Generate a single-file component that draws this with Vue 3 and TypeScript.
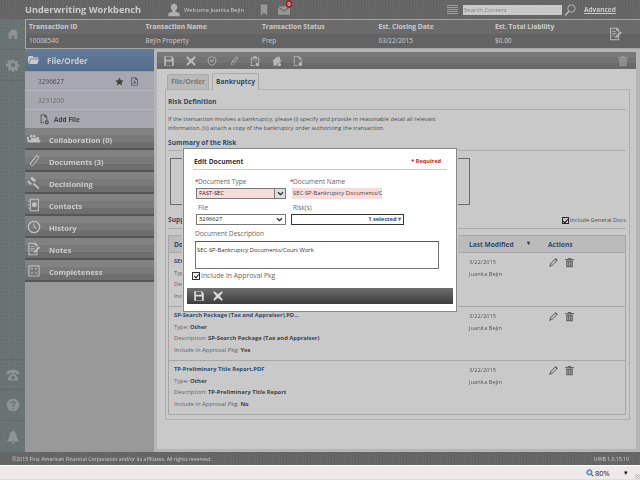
<script setup lang="ts">
const txCols = [
  { label: 'Transaction ID', value: '10008540' },
  { label: 'Transaction Name', value: 'Bejin Property' },
  { label: 'Transaction Status', value: 'Prep' },
  { label: 'Est. Closing Date', value: '03/22/2015' },
  { label: 'Est. Total Liability', value: '$0.00' },
]
const railTop = [
  'M2 10 10 3l3 2.5V3.5h2v3.8L18 10h-2v7h-4v-5H8v5H4v-7z',
  'M8.5 2h3l.4 2.2 1.6.7 1.9-1.3 2 2-1.3 1.9.7 1.6 2.2.4v3l-2.2.4-.7 1.6 1.3 1.9-2 2-1.9-1.3-1.6.7-.4 2.2h-3l-.4-2.2-1.6-.7-1.9 1.3-2-2 1.3-1.9-.7-1.6L0 11.5v-3l2.2-.4.7-1.6-1.3-1.9 2-2 1.9 1.3 1.6-.7zM10 7a3 3 0 1 0 0 6 3 3 0 0 0 0-6z',
]
const railBottom = [
  'M1 7c0-3 4-4.500 9-4.500S19 4 19 7v2h-4.500V6.500h-2V8h-5V6.500h-2V9H1zM6.500 9h7l3.500 6v3H3v-3zM10 11a2.500 2.500 0 1 0 0 5 2.500 2.500 0 0 0 0-5z',
  'M10 1a9 9 0 1 0 0 18 9 9 0 0 0 0-18zm-.9 13h2v2h-2zM10 4c2.200 0 3.800 1.300 3.800 3.300 0 1.500-.9 2.300-1.800 3-.7.500-.9.900-.9 1.700H9.100c0-1.400.4-2.100 1.300-2.800.7-.6 1.200-1 1.200-1.800 0-.8-.7-1.400-1.700-1.400-1 0-1.700.6-1.800 1.700H6.100C6.200 5.300 7.700 4 10 4z',
  'M10 1c1 0 1.500.6 1.500 1.400C14 3.200 15 5 15 8c0 4 1.500 5.500 3 7v1.500H2V15c1.500-1.500 3-3 3-7 0-3 1-4.800 3.500-5.600C8.500 1.600 9 1 10 1zM8 17.500h4a2 2 0 0 1-4 0z',
]
const toolbar = [
  'M2 2h13l3 3v13H2zM5 3v5h9V3zM5 11v6h10v-6z',
  'M4 2l6 5 6-5 2 2-5 6 5 6-2 2-6-5-6 5-2-2 5-6-5-6z',
  'M10 2l7 2.500V10c0 4-3 6.500-7 8-4-1.500-7-4-7-8V4.500zM10 3.500 4.200 5.500V10c0 3.300 2.500 5.400 5.800 6.700 3.300-1.300 5.800-3.400 5.800-6.700V5.500zM6.500 9l1-1 2 2 3.500-3.500 1 1-4.500 4.500z',
  'M14 3c2 0 3 2 2 4l-7 9c-2 2-5 0-4-2l6-8 1 .7-6 8c-.5 1 1 2 2 1l7-9c.6-1 0-2.500-1.500-2.200L7 12l-1-.7 6-6.500C12.500 3.500 13 3 14 3z',
  'M6 3h2V2h4v1h2v2H6zM3 4h2v2h10V4h2v9h-1.500V7h-11v10H10v1.500H3zM7 9h1v1H7zm3 0h3v1h-3zm-3 3h1v1H7zm3 0h1v1h-1zm4 1a3 3 0 1 1 0 6 3 3 0 0 1 0-6z',
  'M2 10l8-7 2 1.700V3h3v4.300L18 10h-2.200v2.500a4 4 0 0 0-5 5H4V10zm12 3.500a2.700 2.700 0 1 1 0 5.400 2.700 2.700 0 0 1 0-5.400z',
  'M3 2h9l4 4v6h-1.400V7H11V3.400H4.400v13.200H10V18H3zM14 12a3.200 3.200 0 1 1 0 6.400 3.200 3.200 0 0 1 0-6.400z',
]
const trash = 'M7 2h6v1.500h5V6H2V3.500h5zM4 7h12v11.500H4zm2.500 2v7.500h1V9zm3 0v7.500h1V9zm3 0v7.500h1V9z'
const pencil = 'M14 2l4 4-10 10-6 2 2-6zM13 5l-8 8 2 2 8-8z'
const accordion = [
  { label: 'Collaboration (0)', icon: 'M3 9a2 2 0 1 1 0-.1zM8 6a2 2 0 1 1 0-.1zM12.500 6a2 2 0 1 1 0-.1zM17.500 9a2 2 0 1 1 0-.1zM1 11h18v4H1zM6 8.500h8V11H6z' },
  { label: 'Documents (3)', icon: 'M14 2c2.500 0 4 2.500 2.500 5l-7 9c-2 2.500-6.500.5-5-3l6-8 1.200.8-6 8c-.8 1.700 1.800 3 3 1.500l7-9c.8-1.500-.5-3-2-2.300L7 12l-1-.8 6-7C12.500 3 13 2 14 2z' },
  { label: 'Decisioning', icon: 'M7 1l6 5-2.500 3L4.500 4zM2 6l5 5-2 2-5-5zM10 10l8 7-1.500 2-8-7z' },
  { label: 'Contacts', icon: 'M4 1h13v18H4zm1.500 1.500v15h10v-15zM10.500 6a3.500 3.500 0 1 1 0 7 3.500 3.500 0 0 1 0-7zM2 4h2v1.500H2zm0 5h2v1.500H2zm0 5h2v1.500H2z' },
  { label: 'History', icon: 'M10 1a9 9 0 1 1 0 18 9 9 0 0 1 0-18zm0 1.800a7.200 7.200 0 1 0 0 14.400 7.200 7.200 0 0 0 0-14.400zM9.300 5h1.400v4.700l3.500 2-.7 1.200-4.200-2.400z' },
  { label: 'Notes', icon: 'M2 1h10l3 3v3l-1.500 1.500V5h-3V2.500h-7v15h10V13l1.500-1.500V19H2zM5 6h5v1.200H5zm0 3h6v1.200H5zm0 3h4v1.200H5zm12-5.500L19 8l-7 7-3 1 1-3z' },
  { label: 'Completeness', icon: 'M2 2h16v16H2zm1.500 1.500v13h13v-13zM5.500 6h3v1.500h-3zm6 0h3v1.500h-3zm-6 6h3v1.500h-3zm6 0h3v1.500h-3z' },
]
const docs = [
  { title: 'SEC-SP-Bankruptcy Documents/Court Work.PDF', type: 'FAST-SEC', desc: 'SEC-SP-Bankruptcy Documents/Court Work', pkg: 'Yes' },
  { title: 'SP-Search Package (Tax and Appraiser).PD...', type: 'Other', desc: 'SP-Search Package (Tax and Appraiser)', pkg: 'Yes' },
  { title: 'TP-Preliminary Title Report.PDF', type: 'Other', desc: 'TP-Preliminary Title Report', pkg: 'No' },
]
</script>

<template>
  <div class="page">
    <div class="shell">
      <header class="topbar">
        <span class="app-title">Underwriting Workbench</span>
        <svg class="ic user" viewBox="0 0 20 20"><path d="M10 1a4.500 4.500 0 0 1 4.500 5c0 2-1 4-2.500 4.700v1.300l6 2.500V19H2v-4.500L8 12v-1.300C6.500 10 5.500 8 5.500 6A4.500 4.500 0 0 1 10 1z" /></svg>
        <span class="welcome">Welcome Juanita Bejin</span>
        <svg class="ic bookmark" viewBox="0 0 10 14"><path d="M1 0h8v14L5 10.500 1 14z" /></svg>
        <span class="mail">
          <svg class="ic mail-ic" viewBox="0 0 14 10"><path d="M0 0h14L7 5zM0 1.500 7 6.500l7-5V10H0z" /></svg>
          <b class="badge">9</b>
        </span>
        <span class="list-ic"><i></i><i></i><i></i><i></i><i></i></span>
        <input class="search" placeholder="Search Content" />
        <svg class="mag" viewBox="0 0 12 12"><circle cx="7.500" cy="4.500" r="3.700" fill="none" stroke="#e6e6e6" stroke-width="1" /><path d="M5 7.200 1 11.500" stroke="#e6e6e6" stroke-width="1.600" /></svg>
        <a class="advanced">Advanced</a>
      </header>

      <aside class="rail">
        <div class="rail-group">
          <span v-for="(d, i) in railTop" :key="i" class="rail-cell"><svg class="ic" viewBox="0 0 20 20"><path :d="d" /></svg></span>
        </div>
        <div class="rail-group">
          <span v-for="(d, i) in railBottom" :key="i" class="rail-cell"><svg class="ic" viewBox="0 0 20 20"><path :d="d" /></svg></span>
        </div>
      </aside>

      <div class="workspace">
        <section class="txbar">
          <div v-for="c in txCols" :key="c.label" class="txcol">
            <div class="txlabel">{{ c.label }}</div>
            <div class="txvalue">{{ c.value }}</div>
          </div>
          <svg class="ic txedit" viewBox="0 0 20 20"><path d="M3 1h10l3 3v3l-1.500 1.500V5h-3V2.500H4.500v15h10V13l1.500-1.500V19H3zM6 6h5v1.200H6zm0 3h6v1.200H6zm0 3h4v1.200H6zm12-5.500L20 8l-7 7-3 1 1-3z" /></svg>
        </section>

        <div class="body">
          <nav class="sidebar">
            <div class="side-head">
              <svg class="ic folder" viewBox="0 0 14 10"><path d="M2 0h4l1 1.500h6V3H3L1 9H0V1zM3.500 4H14l-2 6H1.500z" /></svg>
              File/Order
            </div>
            <div class="side-sub">
              <span>3296627</span>
              <span class="sub-icons">
                <svg class="ic-dark" viewBox="0 0 20 20"><path d="M10 1l2.800 6 6.700.8-5 4.500 1.400 6.700L10 15.600 4.100 19l1.400-6.700-5-4.500L7.200 7z" /></svg>
                <svg class="ic-dark" viewBox="0 0 20 20"><path d="M3 1h10l4 4v14H3zm1.500 1.500v15h11V6h-3.500V2.500zM10 7c1 0 1 2 .5 3.500l2.500 3c1 .1 1.500.5 1 1-.6.400-2-.2-2.500-.8l-3.500 1c-1 2-2.500 2.300-2.500 1.300 0-.7 1-1.300 2-1.800.7-1 1.300-2.500 1.700-3.700C9 9 9 7 10 7z" /></svg>
              </span>
            </div>
            <div class="side-sub alt"><span>3291200</span></div>
            <div class="side-add">
              <svg class="ic-dark add" viewBox="0 0 20 20"><path d="M3 1h8l4 4v6h-1.400V6H10V2.400H4.400v13.200H9V17H3zM14 11.500a3.700 3.700 0 1 1 0 7.400 3.700 3.700 0 0 1 0-7.400zm-.7 1.500v1.500h-1.500v1.200h1.500v1.500h1.300v-1.500h1.500v-1.200h-1.500V13z" /></svg>
              <b>Add File</b>
            </div>
            <div v-for="a in accordion" :key="a.label" class="acc">
              <svg class="ic acc-ic" viewBox="0 0 20 20"><path :d="a.icon" /></svg>
              <span>{{ a.label }}</span>
            </div>
          </nav>

          <main class="main">
            <div class="toolbar">
              <svg v-for="(d, i) in toolbar" :key="i" class="ic tool" viewBox="0 0 20 20"><path :d="d" /></svg>
              <svg class="ic tool trash" viewBox="0 0 20 20"><path :d="trash" /></svg>
            </div>
            <div class="content">
              <div class="tabs">
                <span class="tab off">File/Order</span>
                <span class="tab on">Bankruptcy</span>
              </div>
              <div class="tabbox">
                <h3 class="sec">Risk Definition</h3>
                <p class="para">If the transaction involves a bankruptcy, please (i) specify and provide in reasonable detail all relevant<br />information, (ii) attach a copy of the bankruptcy order authorizing the transaction.</p>
                <h3 class="sec second">Summary of the Risk</h3>
                <div class="summary"></div>
                <h3 class="sec third">
                  <span>Supporting Documents</span>
                  <label class="general"><span class="check small"></span>Include General Docs</label>
                </h3>
                <div class="table">
                  <div class="thead">
                    <span class="c1">Document</span>
                    <span class="c2">Last Modified<i class="caret">▾</i></span>
                    <span class="c3">Actions</span>
                  </div>
                  <div v-for="d in docs" :key="d.desc" class="trow">
                    <div class="c1 info">
                      <div class="dtitle">{{ d.title }}</div>
                      <div>Type: <b>{{ d.type }}</b></div>
                      <div>Description: <b>{{ d.desc }}</b></div>
                      <div>Include In Approval Pkg: <b>{{ d.pkg }}</b></div>
                    </div>
                    <div class="c2 mod">
                      <div>3/22/2015</div>
                      <div>Juanita Bejin</div>
                    </div>
                    <div class="c3 acts">
                      <svg class="act" viewBox="0 0 20 20"><path :d="pencil" /></svg>
                      <svg class="act" viewBox="0 0 20 20"><path :d="trash" /></svg>
                    </div>
                  </div>
                </div>
              </div>
            </div>
          </main>
        </div>
      </div>

      <footer class="foot">
        <span>©2015 First American Financial Corporation and/or its affiliates. All rights reserved.</span>
        <span>UWB 1.0.15.10</span>
      </footer>

      <div class="overlay"></div>

      <div class="modal">
        <div class="m-head">
          <b>Edit Document</b>
          <span class="req">* Required</span>
        </div>
        <div class="m-grid">
          <div class="fld">
            <label class="lbl"><em>*</em>Document Type</label>
            <div class="sel pink"><span>FAST-SEC</span><i class="sel-btn"><svg viewBox="0 0 8 6"><path d="M1 1.500 4 4.500 7 1.500" fill="none" stroke="#222" stroke-width="1.300" /></svg></i></div>
          </div>
          <div class="fld">
            <label class="lbl"><em>*</em>Document Name</label>
            <div class="inp pink">SEC-SP-Bankruptcy Documents/C</div>
          </div>
          <div class="fld">
            <label class="lbl plain">File</label>
            <div class="sel"><span>3296627</span><svg class="chev" viewBox="0 0 8 6"><path d="M1 1.500 4 4.500 7 1.500" fill="none" stroke="#222" stroke-width="1.300" /></svg></div>
          </div>
          <div class="fld">
            <label class="lbl plain">Risk(s)</label>
            <div class="multi">1 selected <i>▾</i></div>
          </div>
        </div>
        <label class="lbl desc-l">Document Description</label>
        <div class="area">SEC-SP-Bankruptcy Documents/Court Work</div>
        <label class="incl"><span class="check"></span>Include In Approval Pkg</label>
        <div class="m-foot">
          <svg class="ic m-ic" viewBox="0 0 20 20"><path :d="toolbar[0]" /></svg>
          <svg class="ic m-ic" viewBox="0 0 20 20"><path :d="toolbar[1]" /></svg>
        </div>
      </div>
    </div>

    <div class="status">
      <svg class="zoom" viewBox="0 0 12 12"><circle cx="5" cy="5" r="4" fill="#7fb0e6" stroke="#2f5f9f" /><path d="M3 5h4M5 3v4" stroke="#fff" /><path d="M8 8l3 3" stroke="#a5702a" stroke-width="2" /></svg>
      <span class="pct">80%</span>
      <span class="drop">▾</span>
      <span class="grip"></span>
    </div>
  </div>
</template>

<style>
html, body { margin: 0; padding: 0; background: #f0e9e9; }
</style>

<style scoped>
.page { width: 640px; height: 480px; overflow: hidden; font-family: "Open Sans", "Liberation Sans", sans-serif; display: flex; flex-direction: column; }
.shell { position: relative; height: 465px; display: grid; grid-template-columns: 25px 1fr; grid-template-rows: 19px 1fr 13px; overflow: hidden; filter: blur(.3px); }
.ic { fill: #fff; display: block; }
.ic-dark { fill: #555; display: block; }

.topbar { grid-column: 1 / 3; display: flex; align-items: center; padding-left: 25px; background: repeating-conic-gradient(#7e7e7e 0 25%, #868686 0 50%) 0 0 / 3px 3px; color: #fff; }
.app-title { font-size: 9.200px; font-weight: 700; width: 142px; white-space: nowrap; }
.user { width: 14px; height: 14px; opacity: .75; }
.welcome { font-size: 5.800px; margin-left: 3px; width: 76px; white-space: nowrap; }
.bookmark { width: 8px; height: 12px; opacity: .5; }
.mail { position: relative; margin-left: 10px; width: 13px; }
.mail-ic { width: 12px; height: 9px; opacity: .5; margin-top: 2px; }
.badge { position: absolute; left: 8px; top: -4px; width: 6px; height: 8px; border-radius: 3px; background: #d8232a; font-size: 6px; line-height: 8px; text-align: center; }
.list-ic { margin-left: 156px; width: 11px; display: flex; flex-direction: column; gap: 1px; }
.list-ic i { height: 1px; background: #c8c8c8; }
.search { margin-left: 5px; width: 99px; height: 10px; box-sizing: border-box; border: 0; padding: 0 1px; background: #fff; font: 6px "Open Sans", sans-serif; outline: none; }
.search::placeholder { color: #aaa; }
.mag { width: 12px; height: 12px; margin-left: 2px; }
.advanced { margin-left: 8px; font-size: 6.500px; font-weight: 700; text-decoration: underline; color: #fff; }

.rail { background: repeating-conic-gradient(#859090 0 25%, #8b9696 0 50%) 0 0 / 3px 3px; display: flex; flex-direction: column; justify-content: space-between; padding-top: 0; }
.rail-cell { height: 31px; display: flex; align-items: center; justify-content: center; border-bottom: 1px solid #7c8686; box-sizing: border-box; }
.rail-cell .ic { width: 14px; height: 14px; fill: #b5bbbb; }
.rail-group:last-child .rail-cell:last-child { border-bottom: 0; }
.rail-group:last-child .rail-cell:first-child { border-top: 1px solid #7c8686; }

.workspace { display: flex; flex-direction: column; min-height: 0; }
.txbar { height: 30px; box-sizing: border-box; border: 1px solid #d2d2d2; border-right: 0; display: flex; padding-left: 3px; background: linear-gradient(#888 0 14px, #7e7e7e 14px); position: relative; color: #fff; }
.txcol { width: 116.500px; font-size: 6.700px; }
.txlabel { font-weight: 700; height: 14px; line-height: 14px; white-space: nowrap; }
.txvalue { line-height: 14px; font-size: 6.500px; }
.txedit { width: 14px; height: 14px; position: absolute; left: 582px; top: 7px; opacity: .85; }

.body { flex: 1; min-height: 0; display: flex; }
.sidebar { width: 129px; background: #c2c2c2; border-right: 3px solid #e6e6e6; flex: none; }
.side-head { height: 22px; background: linear-gradient(#7f9cc2, #6c8bb4); color: #fff; font-size: 8px; font-weight: 700; display: flex; align-items: center; padding-left: 3px; gap: 8px; border-bottom: 1px solid #b9c4d4; }
.folder { width: 11px; height: 8px; }
.side-sub { height: 19px; display: flex; align-items: center; justify-content: space-between; padding: 0 15px 0 13px; font-size: 6.500px; color: #666; background: #d4d4de; border-bottom: 1px solid #e6e6ec; box-sizing: border-box; }
.side-sub.alt { color: #8a8a8a; }
.sub-icons { display: flex; gap: 6px; }
.sub-icons svg { width: 9px; height: 9px; }
.side-add { height: 18px; background: #d4d4de; display: flex; align-items: center; padding-left: 14px; gap: 4px; font-size: 6.500px; color: #555; }
.add { width: 11px; height: 11px; }
.acc { height: 22px; box-sizing: border-box; display: flex; align-items: center; padding-left: 2px; gap: 8px; color: #fff; font-size: 7.600px; font-weight: 700; background: linear-gradient(#a6a6a6 0 7px, #9a9a9a 7px 14px, #8c8c8c 14px 20px, #6c6c6c 20px); white-space: nowrap; }
.acc span { padding-top: 2px; }
.acc-ic { width: 14px; height: 14px; opacity: .9; flex: none; }

.main { flex: 1; min-width: 0; display: flex; flex-direction: column; padding: 3px 4px 3px 0; background: #e6e6e6; }
.toolbar { height: 17px; flex: none; display: flex; align-items: center; gap: 9.500px; padding-left: 6px; background: linear-gradient(#999 0 5px, #929292 5px 11px, #878787 11px); }
.tool { width: 12px; height: 12px; fill: #e8e8e8; flex: none; }
.trash { margin-left: auto; margin-right: 7px; opacity: .6; }
.content { flex: 1; min-height: 0; background: #fff; padding: 3px 6px 0 8px; }
.tabs { display: flex; gap: 3px; align-items: flex-end; height: 17px; padding-left: 2px; }
.tab { font-size: 6.700px; font-weight: 700; padding: 0 3px; box-sizing: border-box; line-height: 14px; border: 1px solid #d8d8d8; border-bottom: 0; border-radius: 2px 2px 0 0; }
.tab.off { color: #999; background: #ebebeb; height: 15px; }
.tab.on { color: #3e5f8c; height: 17px; line-height: 16px; background: #fff; position: relative; top: 1px; }
.tabbox { border: 1px solid #e0e0e0; height: 331px; box-sizing: border-box; padding: 0 3px 0 2px; }
.sec { margin: 0; font-size: 6.600px; font-weight: 700; color: #3e5f8c; height: 20px; line-height: 23px; border-bottom: 1px solid #dcdcdc; box-sizing: border-box; display: flex; justify-content: space-between; }
.para { margin: 5px 0 0; font-size: 5.700px; line-height: 9px; color: #666; white-space: nowrap; }
.sec.second { margin-top: 0; height: 18px; line-height: 20px; }
.summary { margin: 7px 0 0 2px; width: 300px; height: 47px; border: 1px solid #888; box-sizing: border-box; background: #fff; }
.sec.third { height: 24px; line-height: 30px; }
.general { display: flex; align-items: center; gap: 1px; font-weight: 400; font-size: 5.700px; color: #666; height: 30px; }
.check { display: inline-block; box-sizing: border-box; width: 8px; height: 8px; border: 1px solid #333; background: #fff; position: relative; }
.check::after { content: ""; position: absolute; left: 1.500px; top: 0; width: 2px; height: 4px; border: solid #222; border-width: 0 1.300px 1.300px 0; transform: rotate(40deg); }
.check.small { width: 7px; height: 7px; }
.table { margin-top: 6px; border: 1px solid #d4d4d4; height: 180px; box-sizing: border-box; }
.thead { height: 17px; display: flex; align-items: center; background: #ededed; border-bottom: 1px solid #d4d4d4; box-sizing: border-box; font-size: 6.600px; font-weight: 700; color: #3e5f8c; }
.c1 { width: 300px; padding-left: 5px; flex: none; box-sizing: border-box; }
.c2 { width: 79px; flex: none; position: relative; }
.c3 { flex: 1; }
.caret { position: absolute; left: 58px; top: -1px; font-style: normal; font-size: 6px; color: #444; }
.trow { height: 54px; display: flex; border-bottom: 1px solid #d4d4d4; box-sizing: border-box; padding-top: 3px; }
.trow:last-child { border-bottom: 0; }
.info { font-size: 5.800px; line-height: 11.500px; color: #808080; white-space: nowrap; }
.info b { color: #555; font-weight: 700; }
.dtitle { color: #3e5f8c; font-weight: 700; font-size: 5.750px; }
.mod { font-size: 5.700px; line-height: 12px; color: #707070; }
.acts { display: flex; gap: 5px; padding-top: 1px; }
.act { width: 11px; height: 11px; fill: #808080; }

.foot { grid-column: 1 / 3; display: flex; justify-content: space-between; align-items: center; padding: 0 11px 0 12px; color: #fff; font-size: 5.200px; background: repeating-conic-gradient(#7e7e7e 0 25%, #868686 0 50%) 0 0 / 3px 3px; }

.overlay { position: absolute; inset: 0; background: rgba(0, 0, 0, .21); }

.modal { position: absolute; left: 183px; top: 148px; width: 274px; height: 164px; box-sizing: border-box; background: #fff; border: 1px solid #8a8a8a; outline: 1px solid #c8c8c8; padding: 3px 3px 7px; display: flex; flex-direction: column; color: #666; }
.m-head { margin: 0 6px; height: 17px; display: flex; justify-content: space-between; align-items: center; border-bottom: 1px solid #ccc; font-size: 6.700px; color: #333; padding: 1px 6px 0 1px; box-sizing: border-box; height: 18px; }
.req { color: #d01818; font-weight: 700; font-size: 5.600px; }
.m-grid { display: grid; grid-template-columns: 95px 115px; margin: 6px 0 0 9px; }
.fld { display: flex; flex-direction: column; height: 26px; }
.lbl { font-size: 6.600px; line-height: 11px; padding-left: 2px; white-space: nowrap; position: relative; }
.lbl em { position: absolute; left: -1px; color: #d01818; font-style: normal; }
.lbl.plain { font-size: 6.300px; padding-left: 2px; }
.sel, .inp { width: 90px; height: 11px; box-sizing: border-box; font-size: 5.800px; line-height: 9px; color: #222; border: 1px solid #777; display: flex; justify-content: space-between; align-items: center; padding-left: 2px; margin-top: 1px; white-space: nowrap; overflow: hidden; }
.chev { width: 7px; height: 5px; margin-right: 2px; }
.pink { background: #f8dcdc; }
.inp { border: 0; padding-left: 1px; margin-left: 1px; display: block; line-height: 11px; color: #444; }
.sel-btn { width: 10px; height: 9px; background: #ddd; border-left: 1px solid #777; display: flex; align-items: center; justify-content: center; }
.sel-btn svg { width: 7px; height: 5px; }
.multi { width: 113px; height: 11px; margin-top: 1px; box-sizing: border-box; border: 1px solid #333; font-size: 5.700px; line-height: 9px; font-weight: 700; color: #2c4a78; text-align: right; padding-right: 2px; white-space: nowrap; }
.multi i { font-style: normal; color: #666; }
.desc-l { margin: 0 0 0 6px; }
.area { margin: 2px 0 0 8px; width: 244px; height: 28px; box-sizing: border-box; border: 1px solid #777; border-top-color: #555; font-size: 5.800px; line-height: 12px; padding: 2px 1px; color: #333; }
.incl { display: flex; align-items: center; font-size: 6.800px; margin: 2px 0 0 5px; gap: 1px; line-height: 9px; }
.m-foot { margin-top: auto; height: 16px; display: flex; align-items: center; gap: 7px; padding-left: 6px; background: linear-gradient(#6e6e6e, #3d3d3d); }
.m-ic { width: 12px; height: 12px; fill: #d8d8d8; }

.status { height: 15px; box-sizing: border-box; border-top: 1px solid #fff; border-bottom: 1px solid #ddd; background: #f0e9e9; display: flex; align-items: center; padding-left: 586px; }
.zoom { width: 8px; height: 8px; flex: none; }
.pct { font-size: 7.500px; margin-left: 1px; color: #222; width: 20px; }
.drop { font-size: 7px; color: #111; margin-left: 9px; }
.grip { width: 5px; height: 5px; margin-left: auto; align-self: flex-end; background: repeating-conic-gradient(#bbb 0 25%, transparent 0 50%) 0 0 / 2px 2px; }
</style>
